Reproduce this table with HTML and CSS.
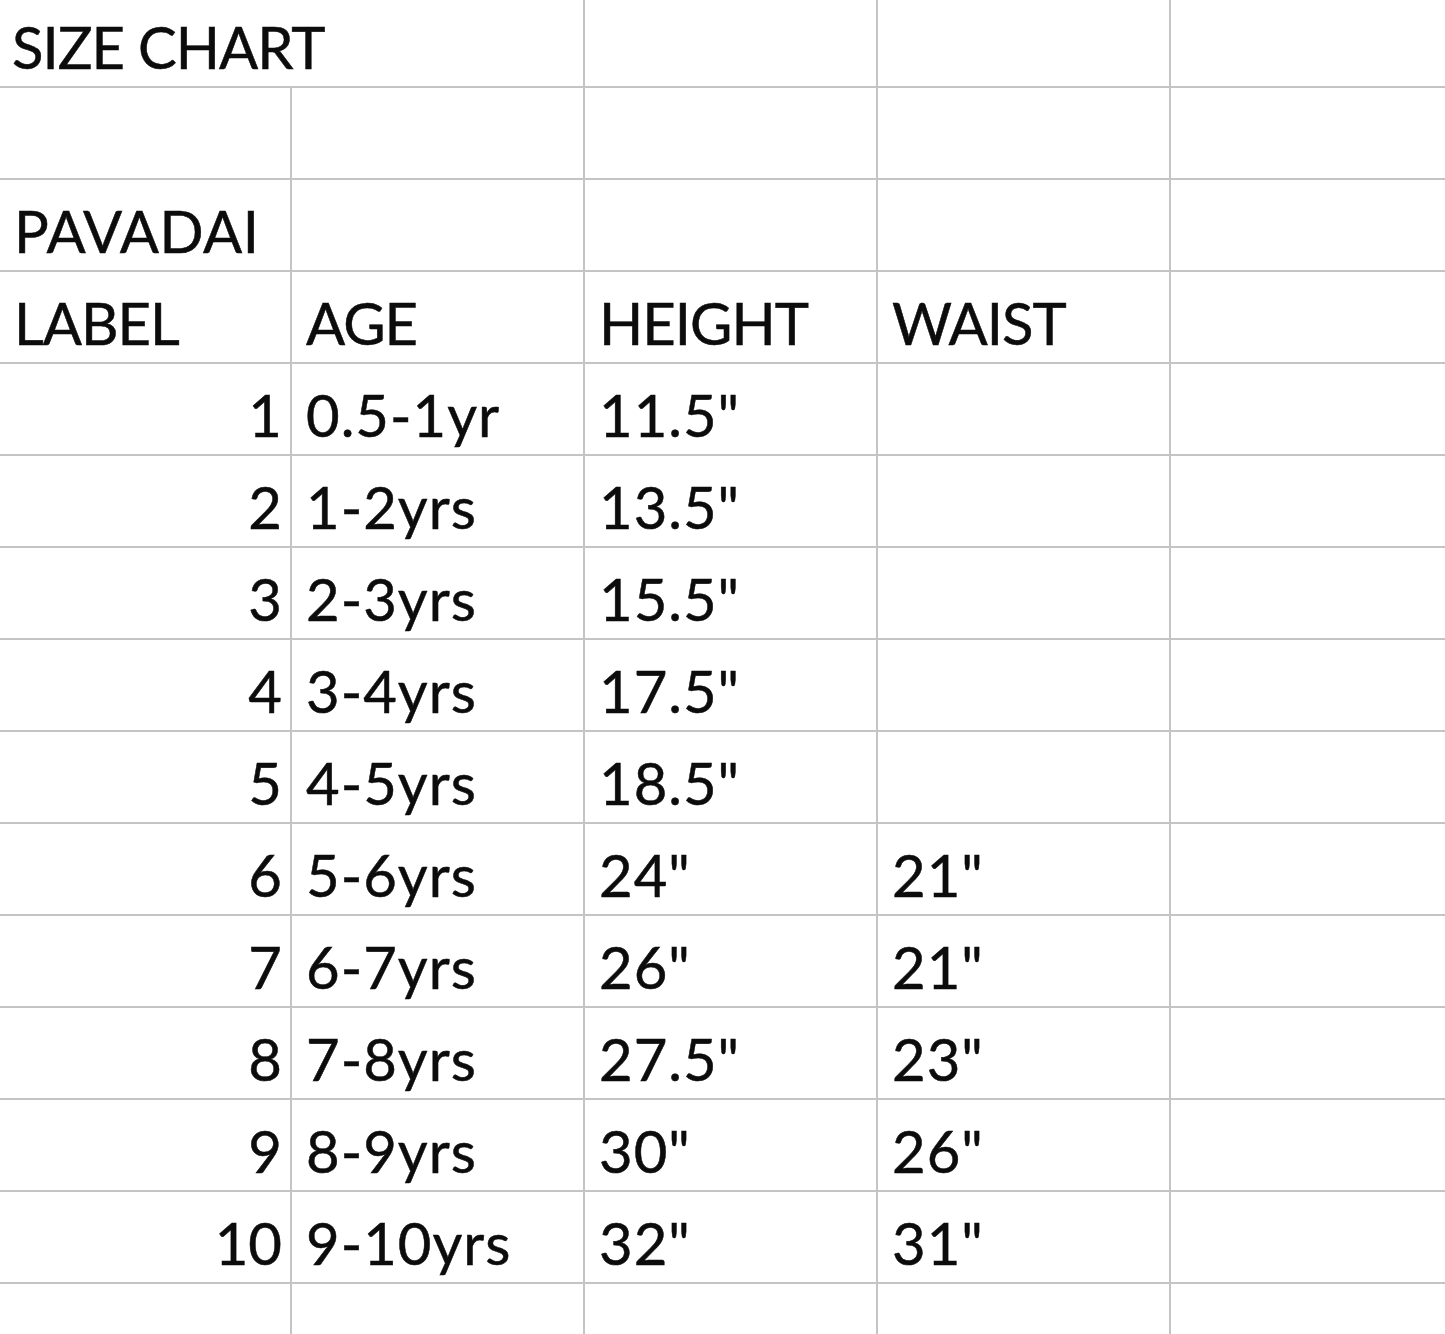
FILE: index.html
```html
<!DOCTYPE html>
<html>
<head>
<meta charset="utf-8">
<link rel="stylesheet" href="styles.css">
</head>
<body>
<div class="sheet">
  <div class="cell span2 first txt">SIZE CHART</div>
  <div class="cell first"></div>
  <div class="cell first"></div>
  <div class="cell first last"></div>

  <div class="cell"></div><div class="cell"></div><div class="cell"></div><div class="cell"></div><div class="cell last"></div>

  <div class="cell title">PAVADAI</div><div class="cell"></div><div class="cell"></div><div class="cell"></div><div class="cell last"></div>

  <div class="cell txt">LABEL</div><div class="cell txt">AGE</div><div class="cell txt">HEIGHT</div><div class="cell txt">WAIST</div><div class="cell last"></div>

  <div class="cell num">1</div><div class="cell">0.5-1yr</div><div class="cell">11.5"</div><div class="cell"></div><div class="cell last"></div>
  <div class="cell num">2</div><div class="cell">1-2yrs</div><div class="cell">13.5"</div><div class="cell"></div><div class="cell last"></div>
  <div class="cell num">3</div><div class="cell">2-3yrs</div><div class="cell">15.5"</div><div class="cell"></div><div class="cell last"></div>
  <div class="cell num">4</div><div class="cell">3-4yrs</div><div class="cell">17.5"</div><div class="cell"></div><div class="cell last"></div>
  <div class="cell num">5</div><div class="cell">4-5yrs</div><div class="cell">18.5"</div><div class="cell"></div><div class="cell last"></div>
  <div class="cell num">6</div><div class="cell">5-6yrs</div><div class="cell">24"</div><div class="cell">21"</div><div class="cell last"></div>
  <div class="cell num">7</div><div class="cell">6-7yrs</div><div class="cell">26"</div><div class="cell">21"</div><div class="cell last"></div>
  <div class="cell num">8</div><div class="cell">7-8yrs</div><div class="cell">27.5"</div><div class="cell">23"</div><div class="cell last"></div>
  <div class="cell num">9</div><div class="cell">8-9yrs</div><div class="cell">30"</div><div class="cell">26"</div><div class="cell last"></div>
  <div class="cell num">10</div><div class="cell">9-10yrs</div><div class="cell">32"</div><div class="cell">31"</div><div class="cell last"></div>

  <div class="cell"></div><div class="cell"></div><div class="cell"></div><div class="cell"></div><div class="cell last"></div>
</div>
</body>
</html>
```
FILE: styles.css
```css
html, body {
  margin: 0;
  padding: 0;
  background: #fff;
}
.sheet {
  display: grid;
  grid-template-columns: 292px 293px 293px 293px 1fr;
  grid-template-rows: 88px;
  grid-auto-rows: 92px;
  width: 1445px;
  height: 1334px;
  overflow: hidden;
  font-family: Lato, "Open Sans", sans-serif;
  font-size: 58px;
  color: #0c0c0c;
  -webkit-text-stroke: 0.5px #0c0c0c;
}
.cell {
  box-sizing: border-box;
  border-right: 2px solid #c4c4c4;
  border-bottom: 2px solid #c4c4c4;
  display: flex;
  align-items: flex-end;
  padding: 0 8px 10px 14px;
  line-height: 58px;
  white-space: nowrap;
  letter-spacing: 1px;
}
.txt {
  letter-spacing: -1px;
}
.title {
  letter-spacing: 0.5px;
}
.span2 {
  grid-column: span 2;
  padding-left: 12px;
}
.num {
  justify-content: flex-end;
  letter-spacing: 0;
}
.last {
  border-right: none;
}
```
